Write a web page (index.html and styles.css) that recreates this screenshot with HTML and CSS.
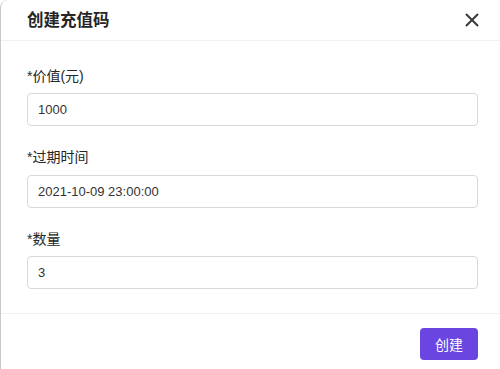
FILE: index.html
```html
<!DOCTYPE html>
<html lang="zh-CN">
<head>
  <meta charset="UTF-8">
  <meta name="viewport" content="width=device-width, initial-scale=1.0">
  <title>创建充值码</title>
  <link rel="stylesheet" href="styles.css">
</head>
<body>
  <div class="modal">
    <div class="modal-header">
      <h2>创建充值码</h2>
      <button class="close-btn" type="button" aria-label="关闭">
        <svg width="14" height="14" viewBox="0 0 14 14">
          <path d="M1.5 1.5 L12.5 12.5 M12.5 1.5 L1.5 12.5" stroke="#3a3a3a" stroke-width="2" stroke-linecap="round"/>
        </svg>
      </button>
    </div>

    <form class="modal-body">
      <div class="form-group">
        <label for="value">*价值(元)</label>
        <input type="text" id="value" value="1000">
      </div>
      <div class="form-group">
        <label for="expire">*过期时间</label>
        <input type="text" id="expire" value="2021-10-09 23:00:00">
      </div>
      <div class="form-group">
        <label for="count">*数量</label>
        <input type="text" id="count" value="3">
      </div>
    </form>

    <div class="modal-footer">
      <button class="create-btn" type="button">创建</button>
    </div>
  </div>
</body>
</html>
```

FILE: styles.css
```css
body {
  font-family: "Liberation Sans", "Noto Sans CJK SC", sans-serif;
  background: #ffffff;
  color: #222;
  margin: 0;
  padding: 0;
}
.modal {
  height: 369px;
  box-sizing: border-box;
  border-left: 1px solid #c9c9c9;
  border-top-left-radius: 8px;
  background-color: #ffffff;
  display: flex;
  flex-direction: column;
}
.modal-header {
  height: 40px;
  display: flex;
  align-items: center;
  justify-content: space-between;
  padding: 0 21px 0 26px;
  border-bottom: 1px solid #eef0f2;
}
.modal-header h2 {
  margin: 0;
  font-size: 16.5px;
  font-weight: bold;
  color: #262626;
  line-height: 40px;
}
.close-btn {
  background: none;
  border: none;
  padding: 0;
  margin: 0;
  width: 14px;
  height: 14px;
  cursor: pointer;
  display: flex;
}
.modal-body {
  padding: 24px 22px 4px 26px;
  margin: 0;
}
.form-group {
  margin-bottom: 20px;
}
.form-group label {
  display: block;
  font-size: 14px;
  line-height: 22px;
  color: #262626;
  margin-bottom: 6px;
}
.form-group input {
  display: block;
  width: 100%;
  height: 33px;
  padding: 0 10px;
  font-family: "Liberation Sans", sans-serif;
  font-size: 13px;
  color: #333;
  border: 1px solid #d9d9d9;
  border-radius: 4px;
  box-sizing: border-box;
  outline: none;
}
.form-group:nth-child(2) label {
  margin-bottom: 7px;
}
.modal-footer {
  border-top: 1px solid #eef0f2;
  margin-top: auto;
  height: 57px;
  box-sizing: border-box;
  padding: 14px 22px 0 0;
  display: flex;
  justify-content: flex-end;
  align-items: flex-start;
}
.create-btn {
  width: 58px;
  height: 32px;
  background-color: #6a45e0;
  color: #ffffff;
  border: none;
  border-radius: 4px;
  font-family: "Liberation Sans", "Noto Sans CJK SC", sans-serif;
  font-size: 14px;
  cursor: pointer;
}
```
